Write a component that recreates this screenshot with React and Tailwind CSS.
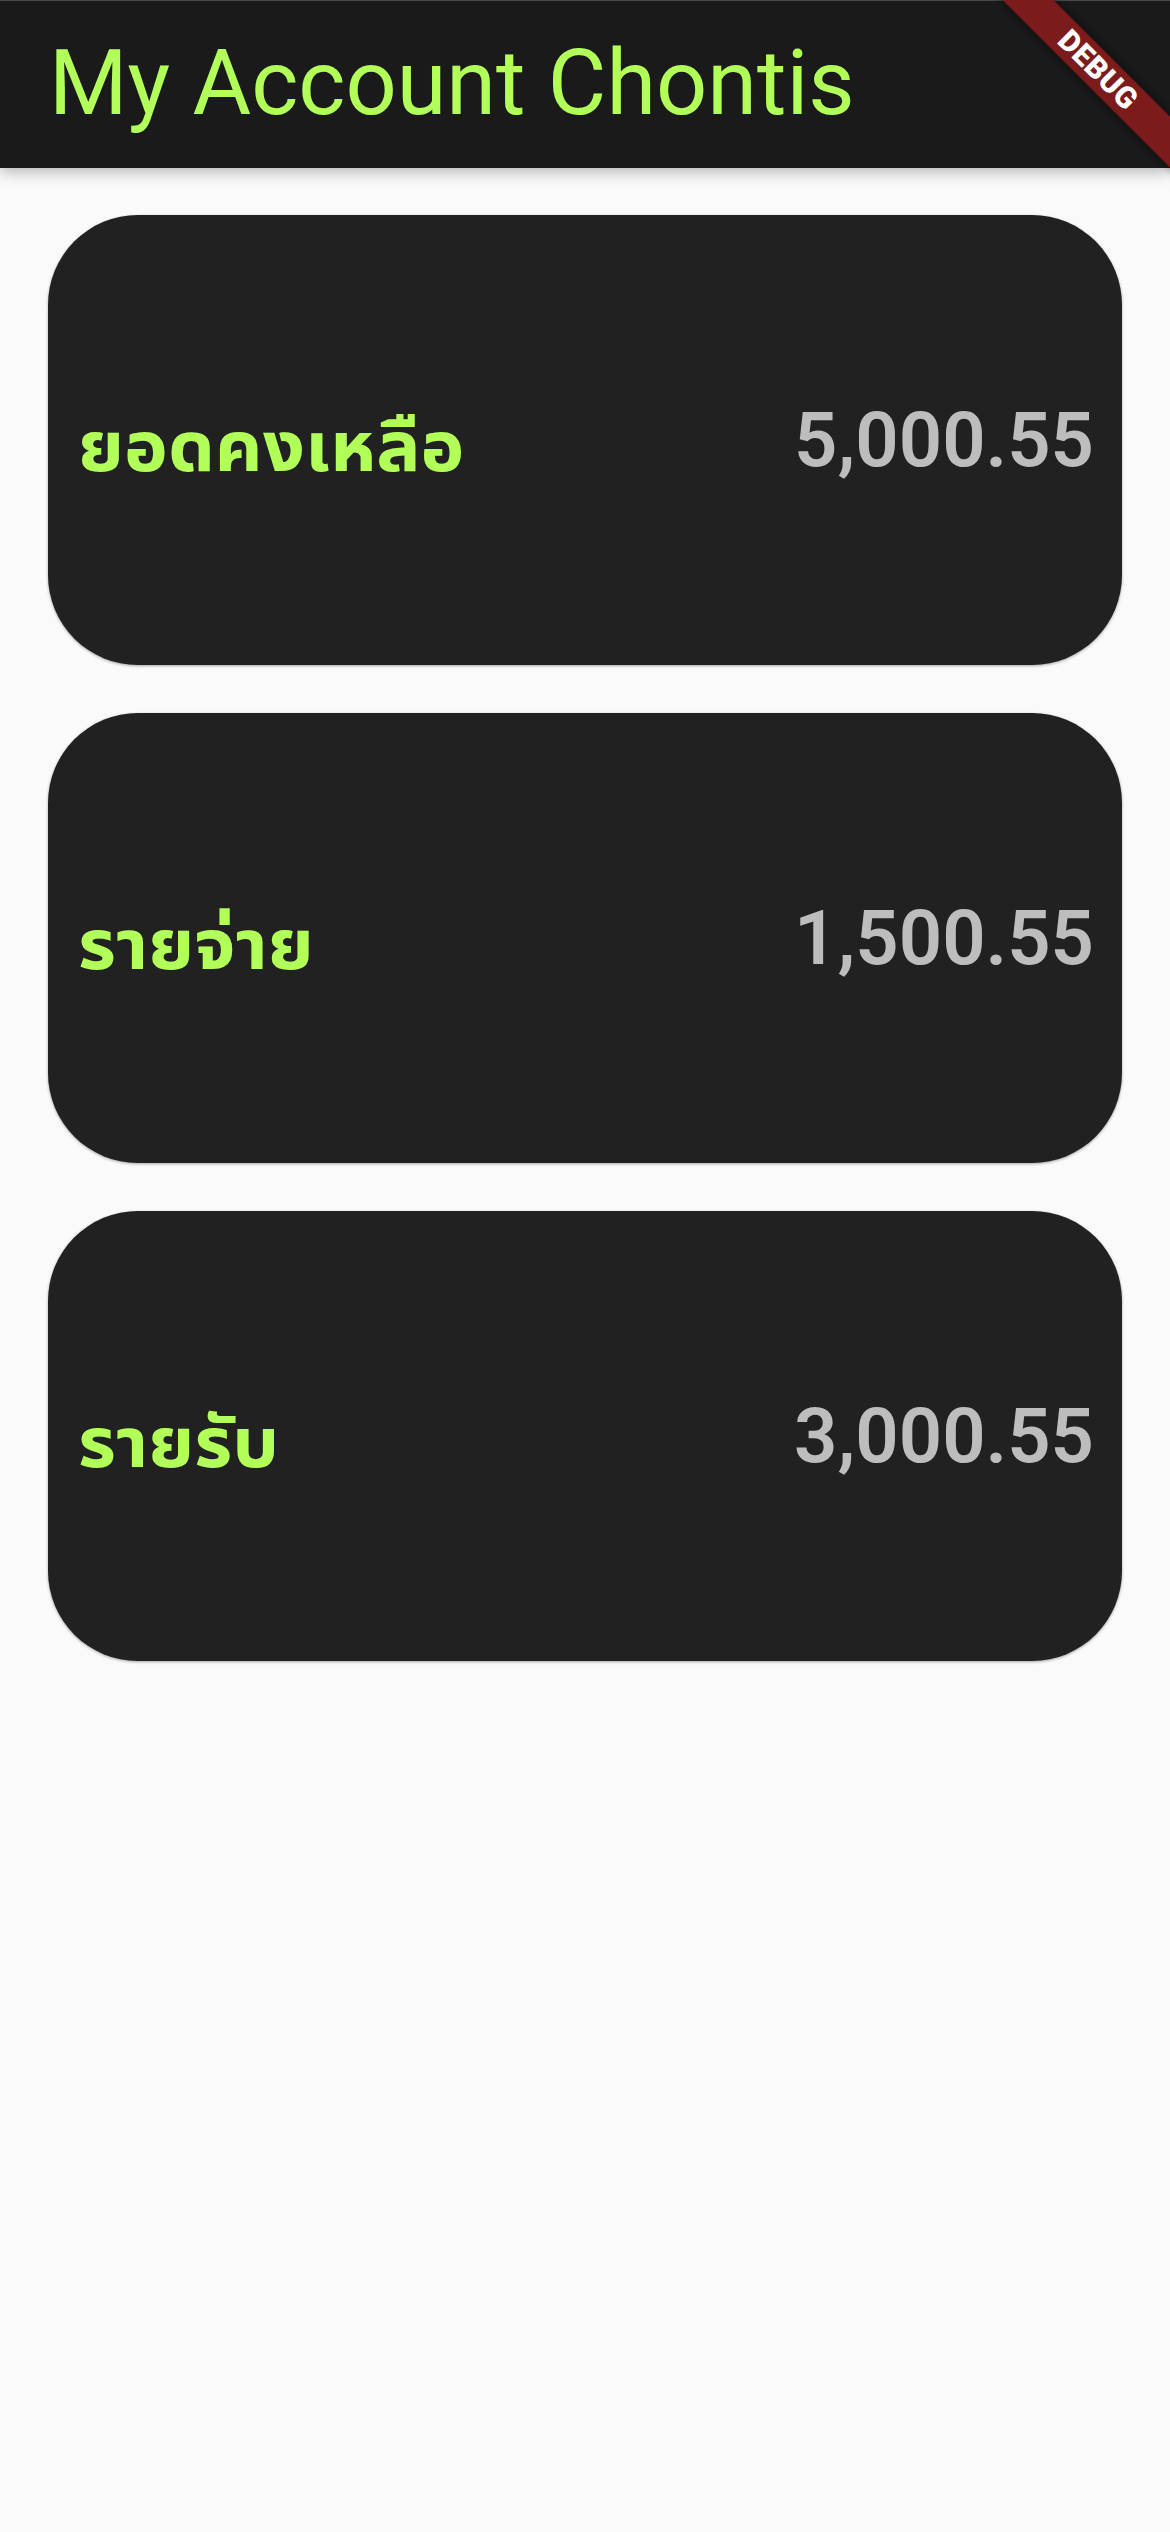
const rows = [
    { label: 'ยอดคงเหลือ', amount: '5,000.55' },
    { label: 'รายจ่าย', amount: '1,500.55' },
    { label: 'รายรับ', amount: '3,000.55' },
]

function DebugBanner() {
    return (
        <div className="absolute left-[948px] top-[52px] w-[300px] h-[36px] rotate-45 bg-[#7b1b1b] shadow-[0_0_8px_rgba(0,0,0,0.5)] flex items-center justify-center pointer-events-none">
            <span className="font-['Roboto',sans-serif] font-black text-[30px] leading-none text-white tracking-[0.5px]">DEBUG</span>
        </div>
    )
}

function BalanceCard({ label, amount }) {
    return (
        <div className="h-[450px] rounded-[90px] bg-[#212121] shadow-[0_1px_3px_rgba(0,0,0,0.35)] pl-[30px] pr-[28px] flex items-center justify-between">
            <span className="font-['Noto_Sans_Thai_UI','Noto_Sans_Thai','Roboto','Noto_Sans',sans-serif] font-bold text-[74px] leading-none text-[#b2ff59] mt-[6px]">
                {label}
            </span>
            <span className="font-['Roboto',sans-serif] font-semibold text-[76px] leading-none text-[#bdbdbd]">
                {amount}
            </span>
        </div>
    )
}

export default function App() {
    return (
        <div className="relative w-full min-h-[2532px] bg-[#fafafa] overflow-hidden">
            <header className="relative z-10 h-[168px] bg-[#1a1a1a] border-t border-[#4a4a4a] shadow-[0_4px_14px_rgba(0,0,0,0.28)] flex items-center pl-[49px]">
                <h1 className="font-['Roboto',sans-serif] font-normal text-[90px] leading-none text-[#b2ff59] -mt-[2px]">
                    My Account Chontis
                </h1>
            </header>
            <main className="px-[48px] pt-[47px] flex flex-col gap-[48px]">
                {rows.map(r => (
                    <BalanceCard key={r.label} label={r.label} amount={r.amount} />
                ))}
            </main>
            <div className="absolute inset-x-0 top-0 h-[300px] overflow-hidden z-20 pointer-events-none">
                <DebugBanner />
            </div>
        </div>
    )
}
